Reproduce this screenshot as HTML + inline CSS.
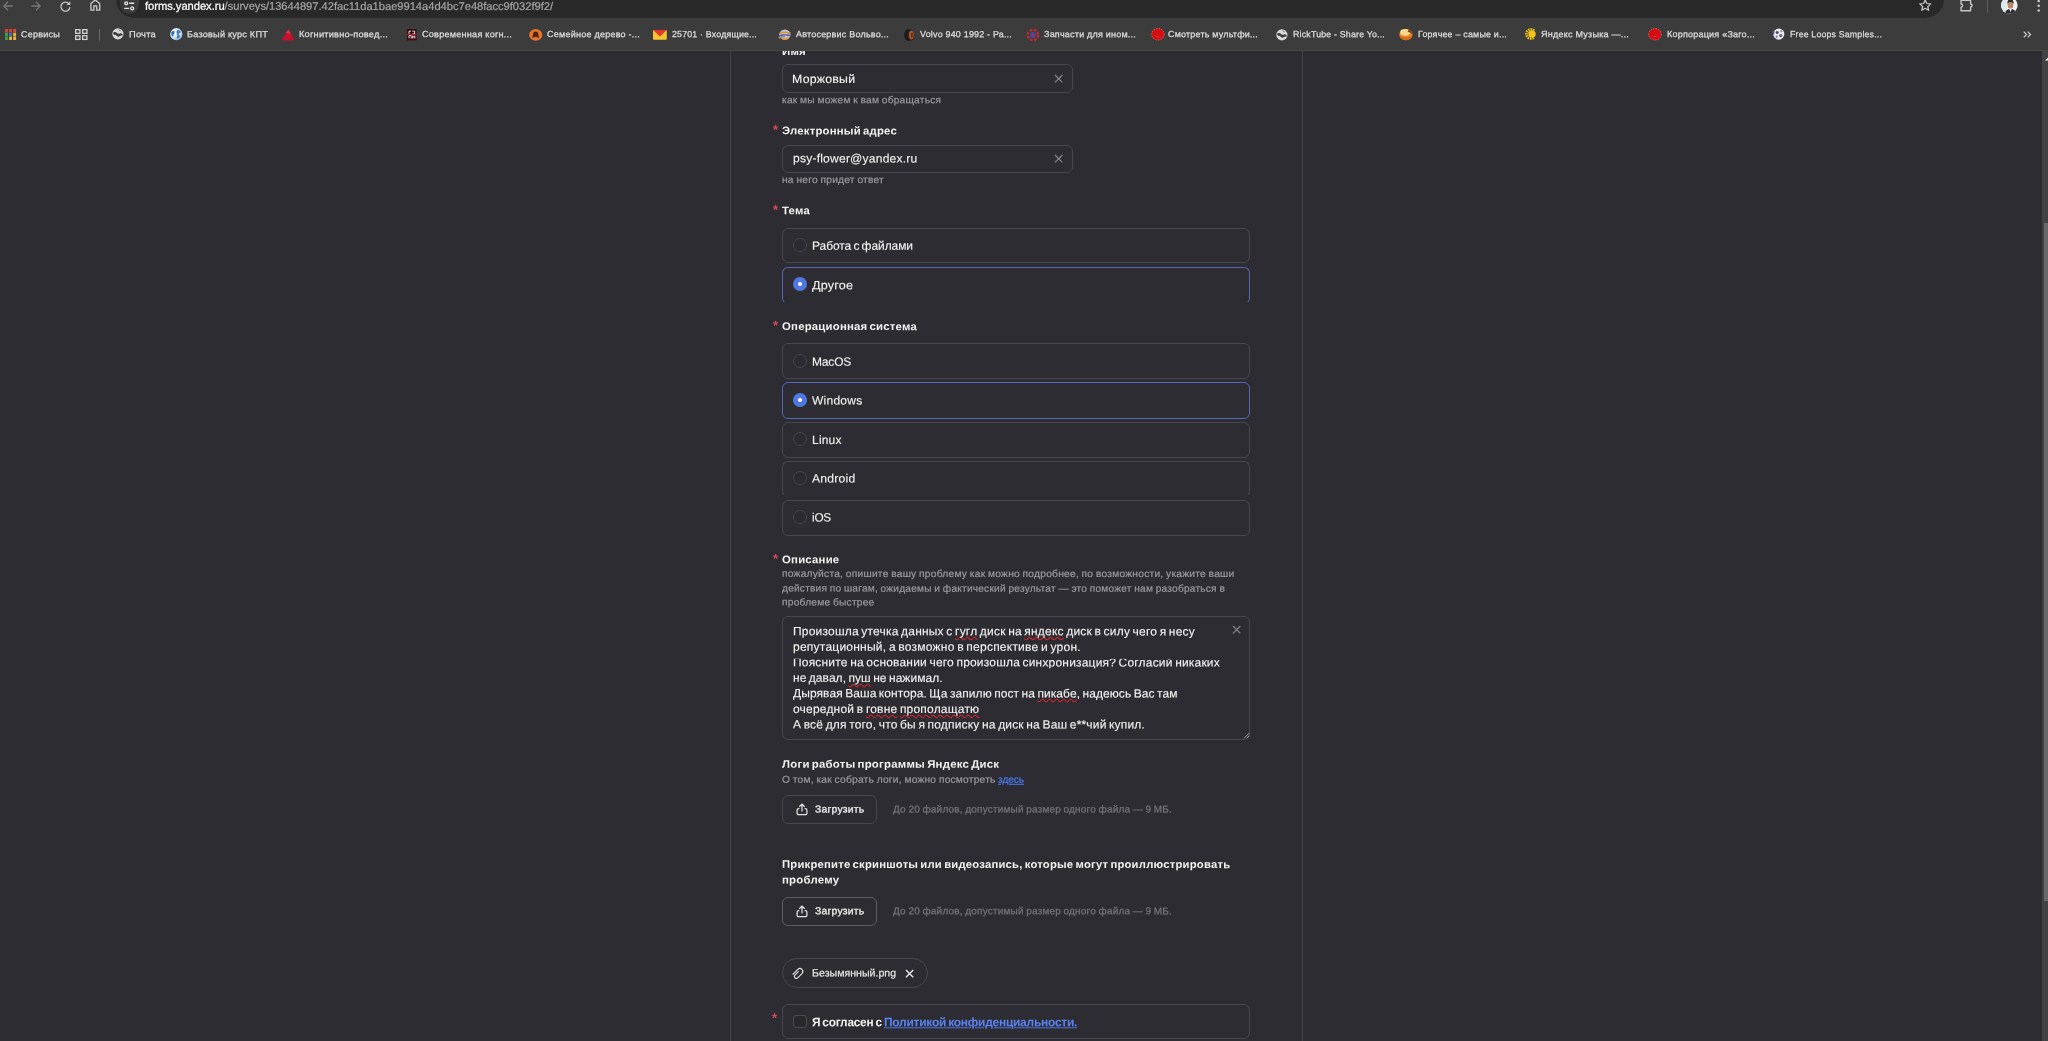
<!DOCTYPE html>
<html lang="ru"><head><meta charset="utf-8"><title>forms.yandex.ru</title>
<style>
*{box-sizing:border-box;margin:0;padding:0}
html,body{width:2048px;height:1041px;overflow:hidden;background:#2d2c32;font-family:"Liberation Sans",sans-serif;}
.t{position:absolute;white-space:nowrap;line-height:1;transform-origin:0 0;}
.a{position:absolute;}
.box{position:absolute;left:782px;width:468px;border:1px solid #48474d;border-radius:6px;}
.sel{border-color:#5069b8;}
.rad{position:absolute;width:14px;height:14px;border-radius:50%;border:1px solid #47464c;background:#2b2a30;}
.rads{position:absolute;width:14px;height:14px;border-radius:50%;background:#5078e2;}
.rads:after{content:"";position:absolute;left:5px;top:5px;width:4px;height:4px;border-radius:50%;background:#fff;}
svg{position:absolute;overflow:visible}
u.sp{text-decoration:underline wavy #e0242c;text-decoration-thickness:1px;text-underline-offset:0.5px;text-decoration-skip-ink:none}
</style></head><body><div id="w" style="position:absolute;left:0;top:0;width:2048px;height:1041px;will-change:transform">
<div class="a" style="left:0px;top:0px;width:2048px;height:51px;background:#3c3c3c;z-index:2;"></div>
<div class="a" style="left:0px;top:50px;width:2048px;height:1px;background:#474747;z-index:2;"></div>
<div class="a" style="left:116px;top:-20px;width:1828px;height:38.4px;background:#282828;border-radius:19px;z-index:2;"></div>
<div class="a" style="left:120px;top:-13px;width:19px;height:27px;background:#3a3a3a;border-radius:10px;z-index:2;"></div>
<div class="a" style="left:2042px;top:51px;width:6px;height:990px;background:#424242;"></div>
<div class="a" style="left:2044px;top:223px;width:4px;height:678px;background:#686868;"></div>
<div class="a" style="left:730px;top:51px;width:1px;height:990px;background:#434248;"></div>
<div class="a" style="left:1302px;top:51px;width:1px;height:990px;background:#434248;"></div>
<div class="box" style="left:782px;top:64px;width:291px;height:29px;"></div>
<svg style="left:1054.8999999999999px;top:75.3px" width="7.4" height="7.4" viewBox="0 0 7.4 7.4"><path d="M0 0L7.4 7.4M7.4 0L0 7.4" stroke="#87878b" stroke-width="1.2" fill="none"/></svg>
<div class="box" style="left:782px;top:145px;width:291px;height:28px;"></div>
<svg style="left:1054.8999999999999px;top:155.10000000000002px" width="7.4" height="7.4" viewBox="0 0 7.4 7.4"><path d="M0 0L7.4 7.4M7.4 0L0 7.4" stroke="#87878b" stroke-width="1.2" fill="none"/></svg>
<div class="box" style="left:782px;top:228px;width:468px;height:35px;"></div>
<div class="rad" style="left:792.6px;top:238.3px"></div>
<div class="box sel" style="left:782px;top:267px;width:468px;height:37px;border-bottom-color:transparent;"></div>
<div class="rads" style="left:792.6px;top:277.2px"></div>
<div class="box" style="left:782px;top:343px;width:468px;height:36px;"></div>
<div class="rad" style="left:792.6px;top:354.0px"></div>
<div class="box sel" style="left:782px;top:382px;width:468px;height:37px;"></div>
<div class="rads" style="left:792.6px;top:393.2px"></div>
<div class="box" style="left:782px;top:422px;width:468px;height:36px;"></div>
<div class="rad" style="left:792.6px;top:432.3px"></div>
<div class="box" style="left:782px;top:461px;width:468px;height:36px;border-bottom-color:transparent;"></div>
<div class="rad" style="left:792.6px;top:471.3px"></div>
<div class="box" style="left:782px;top:500px;width:468px;height:36px;"></div>
<div class="rad" style="left:792.6px;top:510.4px"></div>
<div class="box" style="left:782px;top:616px;width:468px;height:124px;"></div>
<svg style="left:1232.7px;top:626.0px" width="7.4" height="7.4" viewBox="0 0 7.4 7.4"><path d="M0 0L7.4 7.4M7.4 0L0 7.4" stroke="#87878b" stroke-width="1.2" fill="none"/></svg>
<svg style="left:1243.5px;top:733.3px" width="5.4" height="5.4" viewBox="0 0 5.4 5.4"><path d="M5.2 0.2L0.2 5.2M5.2 2.8L2.8 5.2" stroke="#b4b4b4" stroke-width="0.9" fill="none"/></svg>
<div class="box" style="left:782px;top:795px;width:95px;height:29px;"></div>
<div class="box" style="left:782px;top:897px;width:95px;height:29px;border-color:#5f5e64;"></div>
<div class="box" style="left:782px;top:958px;width:146px;height:30px;border-radius:15px;"></div>
<div class="box" style="left:782px;top:1004px;width:468px;height:35px;"></div>
<div class="a" style="left:793px;top:1014.5px;width:13.5px;height:13.5px;border:1px solid #4d4c52;border-radius:3px;background:#29282d"></div>
<svg style="left:905.6px;top:969.8px" width="7.2" height="7.2" viewBox="0 0 7.2 7.2"><path d="M0 0L7.2 7.2M7.2 0L0 7.2" stroke="#e8e8e8" stroke-width="1.4" fill="none"/></svg>
<svg style="left:2.5px;top:0.8px;z-index:3;" width="10" height="10" viewBox="0 0 10 10"><path d="M9.8 5H1M5 0.7L0.8 5L5 9.3" stroke="#747474" stroke-width="1.3" fill="none"/></svg>
<svg style="left:31.3px;top:0.8px;z-index:3;" width="10" height="10" viewBox="0 0 10 10"><path d="M0.2 5H9M5 0.7L9.2 5L5 9.3" stroke="#747474" stroke-width="1.3" fill="none"/></svg>
<svg style="left:60.3px;top:0.6px;z-index:3;" width="10.6" height="10.6" viewBox="0 0 10.6 10.6"><path d="M9.2 3.2A4.5 4.5 0 1 0 9.9 6.2" stroke="#c6c6c6" stroke-width="1.35" fill="none"/><path d="M10.3 0.3V4.1H6.5Z" fill="#c6c6c6"/></svg>
<svg style="left:89.6px;top:-0.6px;z-index:3;" width="10.6" height="12" viewBox="0 0 10.6 12"><path d="M0.9 11.2V4.6L5.3 0.9L9.7 4.6V11.2H6.7V7.0H3.9V11.2Z" stroke="#c6c6c6" stroke-width="1.35" fill="none" stroke-linejoin="miter"/></svg>
<svg style="left:124.3px;top:0px;z-index:3;" width="10.4" height="11" viewBox="0 0 10.4 11"><circle cx="2.2" cy="3.3" r="1.45" stroke="#e2e2e2" stroke-width="1.35" fill="none"/><path d="M5.2 3.3H10.2M0.2 8.4H5.2" stroke="#e2e2e2" stroke-width="1.45"/><circle cx="8.2" cy="8.4" r="1.45" stroke="#e2e2e2" stroke-width="1.35" fill="none"/></svg>
<svg style="left:1919px;top:-0.8px;z-index:3;" width="12.4" height="12" viewBox="0 0 12.4 12"><path d="M6.2 0.9L7.8 4.5L11.7 4.9L8.8 7.5L9.6 11.3L6.2 9.3L2.8 11.3L3.6 7.5L0.7 4.9L4.6 4.5Z" stroke="#c6c6c6" stroke-width="1.25" fill="none" stroke-linejoin="round"/></svg>
<svg style="left:1960px;top:-1.5px;z-index:3;" width="13.4" height="13" viewBox="0 0 13.4 13"><path d="M1 1.2H10.6V5.0A1.5 1.5 0 0 1 10.6 8.0V11.8H1V8.2A1.6 1.6 0 0 0 1 5.0Z" stroke="#c6c6c6" stroke-width="1.4" fill="none" stroke-linejoin="round"/></svg>
<svg style="left:1987px;top:0px;z-index:3;" width="1" height="12.5" viewBox="0 0 1 12.5"><rect width="1" height="12.5" fill="#5e5e5e"/></svg>
<svg style="left:2000.8px;top:-3.4px;z-index:3;" width="16.6" height="16.6" viewBox="0 0 16.6 16.6"><defs><clipPath id="av"><circle cx="8.3" cy="8.3" r="8.3"/></clipPath></defs>
<g clip-path="url(#av)"><rect width="17" height="17" fill="#f1f3f3"/><rect x="0" y="0" width="5.5" height="17" fill="#dde8ea"/>
<ellipse cx="9.5" cy="7.7" rx="2.9" ry="3.9" fill="#b88a6e"/><path d="M6.4 6.8Q6.0 2.6 9.5 2.6Q13 2.6 12.6 6.8Q11.6 4.8 9.5 4.9Q7.4 4.8 6.4 6.8Z" fill="#2c2421"/>
<path d="M4.0 17Q4.4 12.1 9.5 12.1Q14.6 12.1 15 17Z" fill="#2a2a2e"/><path d="M8.3 11.9L9.5 15.2L10.7 11.9Z" fill="#f4f4f4"/></g></svg>
<svg style="left:2036.7px;top:-1px;z-index:3;" width="3" height="13" viewBox="0 0 3 13"><circle cx="1.7" cy="2.0" r="1.3" fill="#c6c6c6"/><circle cx="1.7" cy="6.8" r="1.3" fill="#c6c6c6"/><circle cx="1.7" cy="11.5" r="1.3" fill="#c6c6c6"/></svg>
<svg style="left:2022.8px;top:30.8px;z-index:3;" width="8.6" height="7" viewBox="0 0 8.6 7"><path d="M0.7 0.6L3.6 3.5L0.7 6.4M4.7 0.6L7.6 3.5L4.7 6.4" stroke="#cfcfcf" stroke-width="1.2" fill="none"/></svg>
<svg style="left:2044.5px;top:56.5px;" width="4" height="4" viewBox="0 0 4 4"><path d="M0 3.5L3.5 0.3V3.5Z" fill="#f4f4f4"/></svg>
<svg style="left:4.6px;top:28.8px;z-index:3;" width="11.2" height="11.2" viewBox="0 0 11.2 11.2"><rect x="0.0" y="0.0" width="2.9" height="3.5" fill="#d5443c"/><rect x="0.0" y="3.8" width="2.9" height="3.5" fill="#3f9e54"/><rect x="0.0" y="7.6" width="2.9" height="3.4" fill="#3f9e54"/><rect x="4.1" y="0.0" width="2.9" height="3.5" fill="#d5443c"/><rect x="4.1" y="3.8" width="2.9" height="3.5" fill="#3f73c8"/><rect x="4.1" y="7.6" width="2.9" height="3.4" fill="#e8b53a"/><rect x="8.2" y="0.0" width="2.9" height="3.5" fill="#d5443c"/><rect x="8.2" y="3.8" width="2.9" height="3.5" fill="#e8b53a"/><rect x="8.2" y="7.6" width="2.9" height="3.4" fill="#e8b53a"/></svg>
<svg style="left:74.6px;top:28.8px;z-index:3;" width="12.6" height="11.2" viewBox="0 0 12.6 11.2"><rect x="0.65" y="0.65" width="4.3" height="3.7" stroke="#d2d2d2" stroke-width="1.3" fill="none"/><rect x="0.65" y="6.75" width="4.3" height="3.7" stroke="#d2d2d2" stroke-width="1.3" fill="none"/><rect x="7.65" y="0.65" width="4.3" height="3.7" stroke="#d2d2d2" stroke-width="1.3" fill="none"/><rect x="7.65" y="6.75" width="4.3" height="3.7" stroke="#d2d2d2" stroke-width="1.3" fill="none"/></svg>
<svg style="left:99px;top:28.6px;z-index:3;" width="1" height="11.6" viewBox="0 0 1 11.6"><rect width="1" height="11.6" fill="#6a6a6a"/></svg>
<svg style="left:112px;top:28.4px;z-index:3;" width="11.8" height="11.8" viewBox="0 0 12 12"><circle cx="6" cy="6" r="5.7" fill="#d8d8d8"/><path d="M1.3 4.3Q3.4 3.5 4.9 4.8Q5.9 6.3 7.4 5.8Q9.2 4.9 10.8 6.3L10.6 8.0Q9.1 7.3 7.9 8.2Q6.4 9.5 5.1 8.2Q3.9 6.6 2.0 6.9Q1.1 5.8 1.3 4.3Z" fill="#3a3a3a"/><path d="M6.6 0.9Q8.6 1.6 9.2 3.2Q8 3.4 7.2 2.6Q6.6 1.8 6.6 0.9Z" fill="#3a3a3a" opacity="0.55"/></svg>
<svg style="left:1275.6px;top:28.6px;z-index:3;" width="11.8" height="11.8" viewBox="0 0 12 12"><circle cx="6" cy="6" r="5.7" fill="#d8d8d8"/><path d="M1.3 4.3Q3.4 3.5 4.9 4.8Q5.9 6.3 7.4 5.8Q9.2 4.9 10.8 6.3L10.6 8.0Q9.1 7.3 7.9 8.2Q6.4 9.5 5.1 8.2Q3.9 6.6 2.0 6.9Q1.1 5.8 1.3 4.3Z" fill="#3a3a3a"/><path d="M6.6 0.9Q8.6 1.6 9.2 3.2Q8 3.4 7.2 2.6Q6.6 1.8 6.6 0.9Z" fill="#3a3a3a" opacity="0.55"/></svg>
<svg style="left:169.8px;top:28.2px;z-index:3;" width="12.6" height="12.4" viewBox="0 0 12.6 12.4"><defs><radialGradient id="eg" cx="0.4" cy="0.35" r="0.75"><stop offset="0" stop-color="#ffffff"/><stop offset="0.6" stop-color="#cfe0ee"/><stop offset="1" stop-color="#7fa3c6"/></radialGradient></defs>
<circle cx="6.3" cy="6.2" r="6.1" fill="url(#eg)"/><path d="M1.2 4.2Q3 2.4 4.6 3.2Q5 5 3.6 6.2Q3.8 8 2.6 8.6Q1 7 1.2 4.2Z" fill="#2f6fb3"/><path d="M6.8 2.2Q9.6 1.6 10.8 4Q10 5.6 8.6 5.2Q8.8 7.2 10.2 8Q9 10.6 6.8 11Q6.4 8.6 7.4 7.2Q6 5 6.8 2.2Z" fill="#3b7fc4"/></svg>
<svg style="left:281px;top:28.6px;z-index:3;" width="13.8" height="12" viewBox="0 0 13.8 12"><path d="M7.6 0.4L13.6 11.6H0.2Z" fill="#c8102e"/><path d="M7.6 0.4L9.8 5L4.6 3.8Z" fill="#e0364a"/></svg>
<svg style="left:406.6px;top:28.8px;z-index:3;" width="9.6" height="11.4" viewBox="0 0 9.6 11.4"><rect width="9.6" height="11.4" fill="#3b0d13"/><path d="M2 2.2V5M2 2.2H4M5.4 2.2H7.6V5H5.4M2 6.6H4.2V9.4M2 9.4V6.6M5.6 6.6V9.4M5.6 8H7.8M7.8 6.6V9.4" stroke="#f0e6e6" stroke-width="0.9" fill="none"/><rect x="0" y="5.3" width="9.6" height="0.8" fill="#c8202c"/></svg>
<svg style="left:529px;top:28.8px;z-index:3;" width="13.4" height="11.8" viewBox="0 0 13.4 11.8"><ellipse cx="6.7" cy="5.9" rx="6.6" ry="5.8" fill="#e8732a"/><path d="M6.7 2.4A2.6 2.6 0 0 1 9.3 5Q9.3 7 10.4 8.4H3Q4.1 7 4.1 5A2.6 2.6 0 0 1 6.7 2.4Z" fill="#4a2414"/><ellipse cx="6.7" cy="8.6" rx="1.6" ry="0.9" fill="#e8732a"/></svg>
<svg style="left:653.3px;top:29.8px;z-index:3;" width="13.8" height="9.8" viewBox="0 0 13.8 9.8"><rect width="13.8" height="9.8" rx="0.8" fill="#f7c52e"/><path d="M0 0H13.8L6.9 6.4Z" fill="#e2372c"/></svg>
<svg style="left:777.6px;top:28.6px;z-index:3;" width="13.8" height="11.4" viewBox="0 0 13.8 11.4"><ellipse cx="6.9" cy="5.7" rx="5.6" ry="5.2" fill="#c9c9cf"/><path d="M1.6 3.6Q6.9 1.6 12.2 3.6L12.4 5.0Q6.9 3.2 1.4 5.0Z" fill="#e58a2e"/><path d="M1.3 6.0Q6.9 4.2 12.5 6.0L12.2 7.6Q6.9 5.8 1.6 7.6Z" fill="#3f63b8"/><path d="M0.2 8.2Q6 6 13.6 3.0Q9 7.4 1 9.8Z" fill="#8d8d95"/><path d="M2.4 9.2Q6.9 7.8 11.4 9.2Q9.6 11 6.9 11Q4.2 11 2.4 9.2Z" fill="#e58a2e" opacity="0.85"/></svg>
<svg style="left:903.6px;top:28.6px;z-index:3;" width="11" height="12.2" viewBox="0 0 11 12.2"><ellipse cx="4.6" cy="6.1" rx="4.4" ry="6" fill="#1b1a1a"/><ellipse cx="6.8" cy="6.1" rx="3.6" ry="5.6" fill="#2a2523"/><ellipse cx="7.4" cy="6.1" rx="2.4" ry="4.4" fill="#b4552b"/><ellipse cx="7.9" cy="6.1" rx="1.1" ry="2.6" fill="#6a2c14"/></svg>
<svg style="left:1026px;top:28.6px;z-index:3;" width="13.8" height="12" viewBox="0 0 13.8 12"><circle cx="6.9" cy="6" r="5.2" fill="none" stroke="#d3262b" stroke-width="2.2" stroke-dasharray="2.6 1.5"/><circle cx="6.9" cy="6" r="3.1" fill="#2b4fae"/><path d="M4.4 6.8L6.6 4.2L7.6 6L9.6 5.2L7.4 8.2L6.4 6.4Z" fill="#d3262b"/></svg>
<svg style="left:1150.5px;top:28.4px;z-index:3;" width="13.8" height="12.6" viewBox="0 0 13.8 12.6"><ellipse cx="6.9" cy="6.3" rx="6.5" ry="6" fill="#d30f14"/><ellipse cx="6.9" cy="6.3" rx="6.3" ry="5.8" fill="none" stroke="#f4b8b8" stroke-width="0.5" stroke-dasharray="1.2 1.4"/><path d="M5 8.4H8.8" stroke="#f08a8a" stroke-width="0.5" stroke-dasharray="0.6 0.6"/></svg>
<svg style="left:1648.1px;top:28.4px;z-index:3;" width="13.8" height="12.6" viewBox="0 0 13.8 12.6"><ellipse cx="6.9" cy="6.3" rx="6.5" ry="6" fill="#d30f14"/><ellipse cx="6.9" cy="6.3" rx="6.3" ry="5.8" fill="none" stroke="#f4b8b8" stroke-width="0.5" stroke-dasharray="1.2 1.4"/><path d="M5 8.4H8.8" stroke="#f08a8a" stroke-width="0.5" stroke-dasharray="0.6 0.6"/></svg>
<svg style="left:1399.4px;top:28.2px;z-index:3;" width="13.8" height="12.4" viewBox="0 0 13.8 12.4"><ellipse cx="6.9" cy="6.6" rx="6.6" ry="5.7" fill="#e9852a"/><ellipse cx="6.0" cy="4.4" rx="4.8" ry="3.3" fill="#f8d98c"/><path d="M9.2 1.6Q13 2.6 13.2 6Q11.2 4.2 8.6 3.8Q9.6 2.6 9.2 1.6Z" fill="#8c3a12"/><path d="M0.6 7.6Q6.9 11.4 13.2 7.6Q12 12.2 6.9 12.3Q1.8 12.2 0.6 7.6Z" fill="#d96a1c"/></svg>
<svg style="left:1524.6px;top:28.4px;z-index:3;" width="12" height="12" viewBox="0 0 12 12"><path d="M6 6L9.50 10.87L7.79 11.73Z" fill="#f6c416"/><path d="M6 6L6.60 11.97L4.69 11.86Z" fill="#f6c416"/><path d="M6 6L3.53 11.47L1.94 10.42Z" fill="#f6c416"/><path d="M6 6L1.13 9.50L0.27 7.79Z" fill="#f6c416"/><path d="M6 6L0.03 6.60L0.14 4.69Z" fill="#f6c416"/><path d="M6 6L0.53 3.53L1.58 1.94Z" fill="#f6c416"/><path d="M6 6L2.50 1.13L4.21 0.27Z" fill="#f6c416"/><path d="M6 6L5.40 0.03L7.31 0.14Z" fill="#f6c416"/><path d="M6 6L8.47 0.53L10.06 1.58Z" fill="#f6c416"/><circle cx="7.2" cy="6" r="3.5" fill="#f6c416"/></svg>
<svg style="left:1771.8px;top:28.4px;z-index:3;" width="12.8" height="12.2" viewBox="0 0 12.8 12.2"><circle cx="6.8" cy="6.1" r="5.6" fill="#e9e9ee"/><path d="M0.4 3.2L2.6 2.2L2.2 6.4L0.6 6.6Z" fill="#5a4f86"/><circle cx="5.2" cy="4.4" r="1.5" fill="#4b416f"/><circle cx="8.8" cy="7.6" r="1.7" fill="#6a6590"/><circle cx="9.2" cy="3.2" r="1" fill="#8a86a8"/><circle cx="4.6" cy="8.6" r="1.1" fill="#7d789c"/></svg>
<svg style="left:796.3px;top:803.3000000000001px;" width="12" height="12.6" viewBox="0 0 12 12.6"><path d="M6 8.4V1.3M3.3 3.8L6 1.1L8.7 3.8" stroke="#e4e4e4" stroke-width="1.25" fill="none"/><path d="M3.4 5.6H2.6A1.5 1.5 0 0 0 1.1 7.1V10.2A1.5 1.5 0 0 0 2.6 11.7H9.4A1.5 1.5 0 0 0 10.9 10.2V7.1A1.5 1.5 0 0 0 9.4 5.6H8.6" stroke="#e4e4e4" stroke-width="1.25" fill="none"/></svg>
<svg style="left:796.3px;top:905.1px;" width="12" height="12.6" viewBox="0 0 12 12.6"><path d="M6 8.4V1.3M3.3 3.8L6 1.1L8.7 3.8" stroke="#e4e4e4" stroke-width="1.25" fill="none"/><path d="M3.4 5.6H2.6A1.5 1.5 0 0 0 1.1 7.1V10.2A1.5 1.5 0 0 0 2.6 11.7H9.4A1.5 1.5 0 0 0 10.9 10.2V7.1A1.5 1.5 0 0 0 9.4 5.6H8.6" stroke="#e4e4e4" stroke-width="1.25" fill="none"/></svg>
<svg style="left:791.6px;top:967.4px;" width="12.4" height="12.4" viewBox="0 0 12.4 12.4"><g transform="translate(5.7,6.7) rotate(45)"><path d="M-1.0 -1.9V2.9A1.95 1.95 0 0 0 2.9 2.9V-3.1A2.9 2.9 0 0 0 -2.9 -3.1V3.7" stroke="#e6e6e6" stroke-width="1.1" fill="none" stroke-linecap="round"/></g></svg>
<span class="t" style="left:145px;top:0px;font-size:11.2px;color:#a6a6a6;letter-spacing:-0.040px;transform:matrix(1.0000,0.0006,0,1,0,0.79);z-index:3;-webkit-text-stroke:0.2px #a6a6a6;"><span style="color:#f6f6f6;-webkit-text-stroke:0.3px #f6f6f6">forms.yandex.ru</span>/surveys/13644897.42fac11da1bae9914a4d4bc7e48facc9f032f9f2/</span>
<span class="t" style="left:21px;top:30px;font-size:8.8px;color:#dedede;letter-spacing:0.200px;transform:matrix(1.0303,0.0006,0,1,0,0.14);z-index:3;-webkit-text-stroke:0.25px #dedede;">Сервисы</span>
<span class="t" style="left:129px;top:30px;font-size:8.8px;color:#dedede;letter-spacing:0.200px;transform:matrix(1.0614,0.0006,0,1,0,0.14);z-index:3;-webkit-text-stroke:0.25px #dedede;">Почта</span>
<span class="t" style="left:187px;top:30px;font-size:8.8px;color:#dedede;letter-spacing:0.200px;transform:matrix(1.0416,0.0006,0,1,0,0.13);z-index:3;-webkit-text-stroke:0.25px #dedede;">Базовый курс КПТ</span>
<span class="t" style="left:299px;top:30px;font-size:8.8px;color:#dedede;letter-spacing:0.200px;transform:matrix(1.0532,0.0006,0,1,0,0.12);z-index:3;-webkit-text-stroke:0.25px #dedede;">Когнитивно-повед...</span>
<span class="t" style="left:422px;top:30px;font-size:8.8px;color:#dedede;letter-spacing:0.200px;transform:matrix(1.0404,0.0006,0,1,0,0.12);z-index:3;-webkit-text-stroke:0.25px #dedede;">Современная когн...</span>
<span class="t" style="left:547px;top:30px;font-size:8.8px;color:#dedede;letter-spacing:0.200px;transform:matrix(1.0314,0.0006,0,1,0,0.12);z-index:3;-webkit-text-stroke:0.25px #dedede;">Семейное дерево -...</span>
<span class="t" style="left:672px;top:30px;font-size:8.8px;color:#dedede;letter-spacing:0.193px;transform:matrix(1.0000,0.0006,0,1,0,0.12);z-index:3;-webkit-text-stroke:0.25px #dedede;">25701 · Входящие...</span>
<span class="t" style="left:796px;top:30px;font-size:8.8px;color:#dedede;letter-spacing:0.200px;transform:matrix(1.0234,0.0006,0,1,0,0.12);z-index:3;-webkit-text-stroke:0.25px #dedede;">Автосервис Вольво...</span>
<span class="t" style="left:920px;top:30px;font-size:8.8px;color:#dedede;letter-spacing:0.200px;transform:matrix(1.0145,0.0006,0,1,0,0.12);z-index:3;-webkit-text-stroke:0.25px #dedede;">Volvo 940 1992 - Ра...</span>
<span class="t" style="left:1044px;top:30px;font-size:8.8px;color:#dedede;letter-spacing:0.200px;transform:matrix(1.0251,0.0006,0,1,0,0.12);z-index:3;-webkit-text-stroke:0.25px #dedede;">Запчасти для ином...</span>
<span class="t" style="left:1168px;top:30px;font-size:8.8px;color:#dedede;letter-spacing:0.200px;transform:matrix(1.0184,0.0006,0,1,0,0.12);z-index:3;-webkit-text-stroke:0.25px #dedede;">Смотреть мультфи...</span>
<span class="t" style="left:1293px;top:30px;font-size:8.8px;color:#dedede;letter-spacing:0.195px;transform:matrix(1.0000,0.0006,0,1,0,0.12);z-index:3;-webkit-text-stroke:0.25px #dedede;">RickTube - Share Yo...</span>
<span class="t" style="left:1418px;top:30px;font-size:8.8px;color:#dedede;letter-spacing:0.200px;transform:matrix(1.0110,0.0006,0,1,0,0.12);z-index:3;-webkit-text-stroke:0.25px #dedede;">Горячее – самые и...</span>
<span class="t" style="left:1541px;top:30px;font-size:8.8px;color:#dedede;letter-spacing:0.200px;transform:matrix(1.0314,0.0006,0,1,0,0.12);z-index:3;-webkit-text-stroke:0.25px #dedede;">Яндекс Музыка —...</span>
<span class="t" style="left:1667px;top:30px;font-size:8.8px;color:#dedede;letter-spacing:0.200px;transform:matrix(1.0273,0.0006,0,1,0,0.12);z-index:3;-webkit-text-stroke:0.25px #dedede;">Корпорация «Заго...</span>
<span class="t" style="left:1790px;top:30px;font-size:8.8px;color:#dedede;letter-spacing:0.166px;transform:matrix(1.0000,0.0006,0,1,0,0.12);z-index:3;-webkit-text-stroke:0.25px #dedede;">Free Loops Samples...</span>
<span class="t" style="left:782px;top:46px;font-size:11.0px;color:#f2f2f2;font-weight:700;letter-spacing:0.200px;transform:matrix(1.0404,0.0006,0,1,0,-0.01);word-spacing:-1.2px;">Имя</span>
<span class="t" style="left:791.9px;top:72px;font-size:12.0px;color:#f2f2f2;letter-spacing:0.200px;transform:matrix(1.0294,0.0006,0,1,0,0.88);-webkit-text-stroke:0.12px #f2f2f2;word-spacing:-1px;">Моржовый</span>
<span class="t" style="left:782px;top:95px;font-size:10.0px;color:#9a9a9f;letter-spacing:0.200px;transform:matrix(1.0209,0.0006,0,1,0,0.25);-webkit-text-stroke:0.2px #9a9a9f;word-spacing:-0.4px;">как мы можем к вам обращаться</span>
<span class="t" style="left:782px;top:125px;font-size:11.0px;color:#f2f2f2;font-weight:700;letter-spacing:0.200px;transform:matrix(1.0317,0.0006,0,1,0,0.37);word-spacing:-1.2px;">Электронный адрес</span>
<span class="t" style="left:792.5px;top:152px;font-size:12.0px;color:#f2f2f2;letter-spacing:0.200px;transform:matrix(1.0076,0.0006,0,1,0,0.36);-webkit-text-stroke:0.12px #f2f2f2;word-spacing:-1px;">psy-flower@yandex.ru</span>
<span class="t" style="left:782px;top:175px;font-size:10.0px;color:#9a9a9f;letter-spacing:0.200px;transform:matrix(1.0258,0.0006,0,1,0,0.07);-webkit-text-stroke:0.2px #9a9a9f;word-spacing:-0.4px;">на него придет ответ</span>
<span class="t" style="left:782px;top:205px;font-size:11.0px;color:#f2f2f2;font-weight:700;letter-spacing:0.200px;transform:matrix(1.0345,0.0006,0,1,0,0.19);word-spacing:-1.2px;">Тема</span>
<span class="t" style="left:812px;top:239px;font-size:12.0px;color:#f2f2f2;letter-spacing:-0.072px;transform:matrix(1.0000,0.0006,0,1,0,0.77);-webkit-text-stroke:0.12px #f2f2f2;word-spacing:-1px;">Работа с файлами</span>
<span class="t" style="left:812px;top:279px;font-size:12.0px;color:#f2f2f2;letter-spacing:0.200px;transform:matrix(1.0498,0.0006,0,1,0,0.19);-webkit-text-stroke:0.12px #f2f2f2;word-spacing:-1px;">Другое</span>
<span class="t" style="left:782px;top:321px;font-size:11.0px;color:#f2f2f2;font-weight:700;letter-spacing:0.200px;transform:matrix(1.0341,0.0006,0,1,0,0.06);word-spacing:-1.2px;">Операционная система</span>
<span class="t" style="left:812px;top:355px;font-size:12.0px;color:#f2f2f2;letter-spacing:-0.163px;transform:matrix(1.0000,0.0006,0,1,0,0.69);-webkit-text-stroke:0.12px #f2f2f2;word-spacing:-1px;">MacOS</span>
<span class="t" style="left:812px;top:394px;font-size:12.0px;color:#f2f2f2;letter-spacing:0.200px;transform:matrix(1.0062,0.0006,0,1,0,0.38);-webkit-text-stroke:0.12px #f2f2f2;word-spacing:-1px;">Windows</span>
<span class="t" style="left:812px;top:433px;font-size:12.0px;color:#f2f2f2;letter-spacing:0.200px;transform:matrix(1.0004,0.0006,0,1,0,0.89);-webkit-text-stroke:0.12px #f2f2f2;word-spacing:-1px;">Linux</span>
<span class="t" style="left:812px;top:472px;font-size:12.0px;color:#f2f2f2;letter-spacing:0.200px;transform:matrix(1.0146,0.0006,0,1,0,0.59);-webkit-text-stroke:0.12px #f2f2f2;word-spacing:-1px;">Android</span>
<span class="t" style="left:812px;top:511px;font-size:12.0px;color:#f2f2f2;letter-spacing:-0.250px;transform:matrix(0.9862,0.0006,0,1,0,0.49);-webkit-text-stroke:0.12px #f2f2f2;word-spacing:-1px;">iOS</span>
<span class="t" style="left:782px;top:554px;font-size:11.0px;color:#f2f2f2;font-weight:700;letter-spacing:0.200px;transform:matrix(1.0350,0.0006,0,1,0,0.28);word-spacing:-1.2px;">Описание</span>
<span class="t" style="left:782px;top:569px;font-size:10.0px;color:#9a9a9f;letter-spacing:0.200px;transform:matrix(1.0272,0.0006,0,1,0,-0.14);-webkit-text-stroke:0.2px #9a9a9f;word-spacing:-0.4px;">пожалуйста, опишите вашу проблему как можно подробнее, по возможности, укажите ваши</span>
<span class="t" style="left:782px;top:583px;font-size:10.0px;color:#9a9a9f;letter-spacing:0.200px;transform:matrix(1.0161,0.0006,0,1,0,0.57);-webkit-text-stroke:0.2px #9a9a9f;word-spacing:-0.4px;">действия по шагам, ожидаемы и фактический результат — это поможет нам разобраться в</span>
<span class="t" style="left:782px;top:597px;font-size:10.0px;color:#9a9a9f;letter-spacing:0.200px;transform:matrix(1.0230,0.0006,0,1,0,0.37);-webkit-text-stroke:0.2px #9a9a9f;word-spacing:-0.4px;">проблеме быстрее</span>
<span class="t" style="left:792.5px;top:625px;font-size:12.0px;color:#f2f2f2;letter-spacing:0.195px;transform:matrix(1.0000,0.0006,0,1,0,0.18);-webkit-text-stroke:0.12px #f2f2f2;word-spacing:-1px;">Произошла утечка данных с <u class="sp">гугл</u> диск на <u class="sp">яндекс</u> диск в силу чего я несу</span>
<span class="t" style="left:792.5px;top:640px;font-size:12.0px;color:#f2f2f2;letter-spacing:0.200px;transform:matrix(1.0053,0.0006,0,1,0,0.74);-webkit-text-stroke:0.12px #f2f2f2;word-spacing:-1px;">репутационный, а возможно в перспективе и урон.</span>
<span class="t" style="left:792.5px;top:656px;font-size:12.0px;color:#f2f2f2;letter-spacing:0.186px;transform:matrix(1.0000,0.0006,0,1,0,0.23);-webkit-text-stroke:0.12px #f2f2f2;word-spacing:-1px;clip-path:inset(2.4px 0 0 0);">Поясните на основании чего произошла синхронизация? Согласий никаких</span>
<span class="t" style="left:792.5px;top:671px;font-size:12.0px;color:#f2f2f2;letter-spacing:0.056px;transform:matrix(1.0000,0.0006,0,1,0,0.85);-webkit-text-stroke:0.12px #f2f2f2;word-spacing:-1px;">не давал, <u class="sp">пуш</u> не нажимал.</span>
<span class="t" style="left:792.5px;top:687px;font-size:12.0px;color:#f2f2f2;letter-spacing:0.077px;transform:matrix(1.0000,0.0006,0,1,0,0.30);-webkit-text-stroke:0.12px #f2f2f2;word-spacing:-1px;">Дырявая Ваша контора. Ща запилю пост на <u class="sp">пикабе</u>, надеюсь Вас там</span>
<span class="t" style="left:792.5px;top:702px;font-size:12.0px;color:#f2f2f2;letter-spacing:0.200px;transform:matrix(1.0000,0.0006,0,1,0,0.89);-webkit-text-stroke:0.12px #f2f2f2;word-spacing:-1px;">очередной в <u class="sp">говне</u> <u class="sp">прополащатю</u></span>
<span class="t" style="left:792.5px;top:718px;font-size:12.0px;color:#f2f2f2;letter-spacing:0.175px;transform:matrix(1.0000,0.0006,0,1,0,0.37);-webkit-text-stroke:0.12px #f2f2f2;word-spacing:-1px;">А всё для того, что бы я подписку на диск на Ваш е**чий купил.</span>
<span class="t" style="left:782px;top:758px;font-size:11.0px;color:#f2f2f2;font-weight:700;letter-spacing:0.200px;transform:matrix(1.0387,0.0006,0,1,0,0.63);word-spacing:-1.2px;">Логи работы программы Яндекс Диск</span>
<span class="t" style="left:782px;top:774px;font-size:10.0px;color:#9a9a9f;letter-spacing:0.200px;transform:matrix(1.0242,0.0006,0,1,0,0.64);-webkit-text-stroke:0.2px #9a9a9f;word-spacing:-0.4px;">О том, как собрать логи, можно посмотреть</span>
<span class="t" style="left:997.9px;top:774px;font-size:10.0px;color:#4c7dfa;letter-spacing:0.023px;transform:matrix(1.0000,0.0006,0,1,0,0.69);-webkit-text-stroke:0.2px #4c7dfa;"><span style="text-decoration:underline">здесь</span></span>
<span class="t" style="left:814.5px;top:804px;font-size:10.2px;color:#ececec;letter-spacing:0.200px;transform:matrix(1.0245,0.0006,0,1,0,0.49);-webkit-text-stroke:0.3px #ececec;">Загрузить</span>
<span class="t" style="left:893.3px;top:804px;font-size:10.0px;color:#75747a;letter-spacing:0.188px;transform:matrix(1.0000,0.0006,0,1,0,0.42);-webkit-text-stroke:0.25px #75747a;word-spacing:-0.4px;">До 20 файлов, допустимый размер одного файла — 9 МБ.</span>
<span class="t" style="left:782px;top:859px;font-size:11.0px;color:#f2f2f2;font-weight:700;letter-spacing:0.200px;transform:matrix(1.0270,0.0006,0,1,0,-0.13);word-spacing:-1.2px;">Прикрепите скриншоты или видеозапись, которые могут проиллюстрировать</span>
<span class="t" style="left:782px;top:874px;font-size:11.0px;color:#f2f2f2;font-weight:700;letter-spacing:0.200px;transform:matrix(1.0375,0.0006,0,1,0,0.58);word-spacing:-1.2px;">проблему</span>
<span class="t" style="left:814.5px;top:906px;font-size:10.2px;color:#ececec;letter-spacing:0.200px;transform:matrix(1.0245,0.0006,0,1,0,0.29);-webkit-text-stroke:0.3px #ececec;">Загрузить</span>
<span class="t" style="left:893.3px;top:906px;font-size:10.0px;color:#75747a;letter-spacing:0.188px;transform:matrix(1.0000,0.0006,0,1,0,0.22);-webkit-text-stroke:0.25px #75747a;word-spacing:-0.4px;">До 20 файлов, допустимый размер одного файла — 9 МБ.</span>
<span class="t" style="left:812px;top:967px;font-size:10.6px;color:#e6e6e6;letter-spacing:0.017px;transform:matrix(1.0000,0.0006,0,1,0,0.54);-webkit-text-stroke:0.2px #e6e6e6;">Безымянный.png</span>
<span class="t" style="left:812px;top:1016px;font-size:12.3px;color:#f2f2f2;font-weight:700;letter-spacing:-0.250px;transform:matrix(0.9636,0.0006,0,1,0,0.18);word-spacing:-1px;">Я согласен с</span>
<span class="t" style="left:884.2px;top:1016px;font-size:12.3px;color:#5b84f2;font-weight:700;letter-spacing:-0.250px;transform:matrix(0.9728,0.0006,0,1,0,0.14);word-spacing:-1px;"><span style="text-decoration:underline;text-decoration-color:#4a72e6">Политикой конфиденциальности.</span></span>
<span class="t" style="left:772.6px;top:123px;font-size:13px;color:#d9485c;font-weight:700;transform:matrix(1.0000,0.0006,0,1,0,0.10);">*</span>
<span class="t" style="left:772.6px;top:202px;font-size:13px;color:#d9485c;font-weight:700;transform:matrix(1.0000,0.0006,0,1,0,0.90);">*</span>
<span class="t" style="left:772.6px;top:318px;font-size:13px;color:#d9485c;font-weight:700;transform:matrix(1.0000,0.0006,0,1,0,0.80);">*</span>
<span class="t" style="left:772.6px;top:552px;font-size:13px;color:#d9485c;font-weight:700;transform:matrix(1.0000,0.0006,0,1,0,-0.00);">*</span>
<span class="t" style="left:772.4px;top:1011px;font-size:13px;color:#d9485c;font-weight:700;transform:matrix(1.0000,0.0006,0,1,0,0.30);">*</span>
</div></body></html>
